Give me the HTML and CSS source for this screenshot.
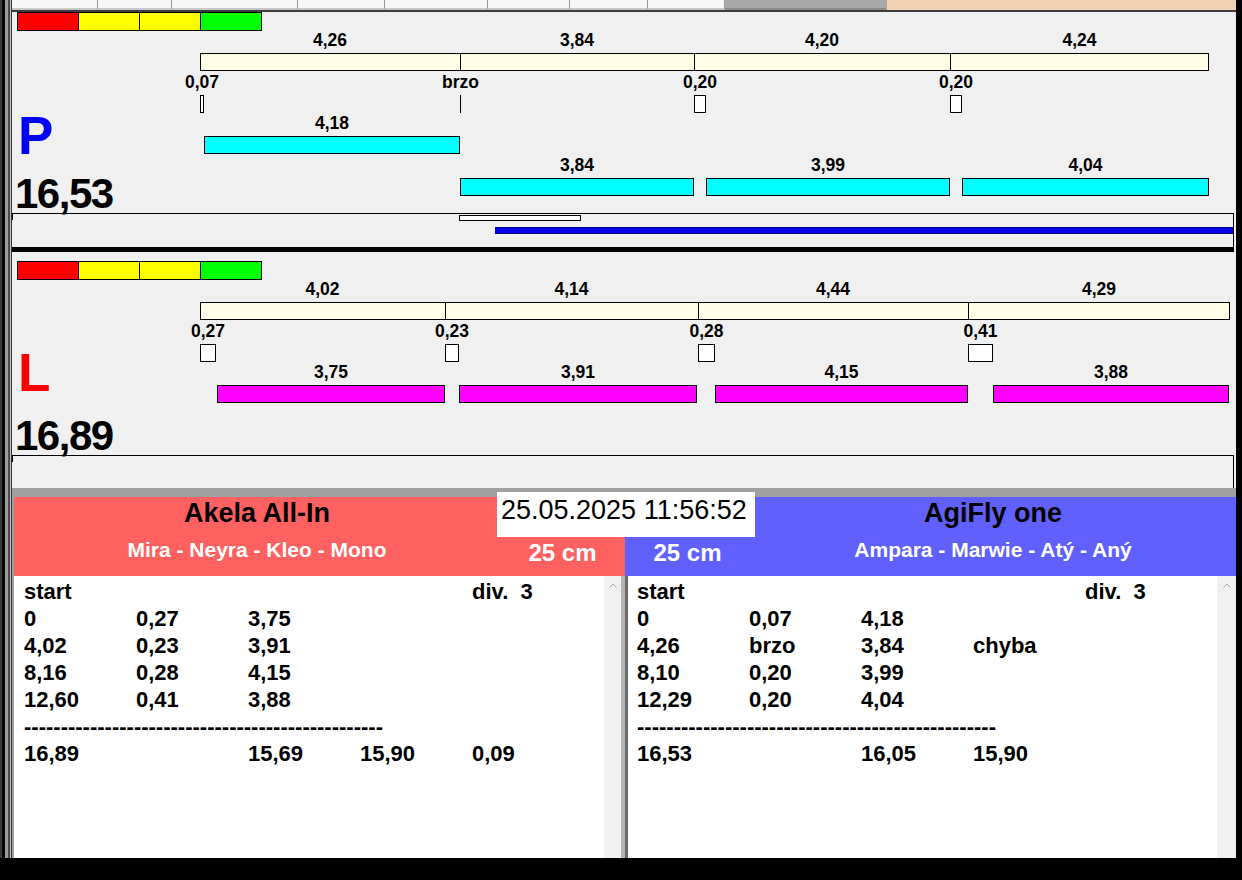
FILE: index.html
```html
<!DOCTYPE html>
<html>
<head>
<meta charset="utf-8">
<title>Agility - beh</title>
<link rel="stylesheet" href="styles.css">
</head>
<body>
<div class="app">
  <div class="edge"></div>
  <div class="main">
    <div class="tabs">
      <div class="tab t1"></div>
      <div class="tab t2"></div>
      <div class="tab t3"></div>
      <div class="tab t4"></div>
      <div class="tab t5"></div>
      <div class="tab t6"></div>
      <div class="tab t7"></div>
      <div class="tab t8"></div>
      <div class="tab-off"></div>
      <div class="tab-peach"></div>
    </div>

    <!-- P lane -->
    <div class="panel p">
      <div class="sig"><span class="r"></span><span class="y"></span><span class="y"></span><span class="g"></span></div>
      <div class="lane">
        <div class="side">
          <div class="letter">P</div>
          <div class="total">16,53</div>
        </div>
        <div class="chart">
          <div class="row laps">
            <div class="lap" style="width:260px"><span class="lb">4,26</span><span class="cell"></span></div>
            <div class="lap" style="width:234px"><span class="lb">3,84</span><span class="cell"></span></div>
            <div class="lap" style="width:256px"><span class="lb">4,20</span><span class="cell"></span></div>
            <div class="lap" style="width:259px"><span class="lb">4,24</span><span class="cell"></span></div>
          </div>
          <div class="row gaps">
            <div class="gp" style="width:4px"><span class="lb">0,07</span><span class="box"></span></div>
            <div class="gp" style="margin-left:256px;width:1px"><span class="lb">brzo</span><span class="box line"></span></div>
            <div class="gp" style="margin-left:233px;width:12px"><span class="lb">0,20</span><span class="box"></span></div>
            <div class="gp" style="margin-left:244px;width:12px"><span class="lb">0,20</span><span class="box"></span></div>
          </div>
          <div class="row runs">
            <div class="run cyan" style="margin-left:4px;width:256px"><span class="lb">4,18</span><span class="bar"></span></div>
          </div>
          <div class="row runs">
            <div class="run cyan" style="margin-left:260px;width:234px"><span class="lb">3,84</span><span class="bar"></span></div>
            <div class="run cyan" style="margin-left:12px;width:244px"><span class="lb">3,99</span><span class="bar"></span></div>
            <div class="run cyan" style="margin-left:12px;width:247px"><span class="lb">4,04</span><span class="bar"></span></div>
          </div>
        </div>
      </div>
      <div class="track">
        <div class="tb white" style="margin-left:447px;width:122px"></div>
        <div class="tb blue" style="margin-left:483px"></div>
      </div>
    </div>

    <div class="sep"></div>

    <!-- L lane -->
    <div class="panel l">
      <div class="sig"><span class="r"></span><span class="y"></span><span class="y"></span><span class="g"></span></div>
      <div class="lane">
        <div class="side">
          <div class="letter">L</div>
          <div class="total">16,89</div>
        </div>
        <div class="chart">
          <div class="row laps">
            <div class="lap" style="width:245px"><span class="lb">4,02</span><span class="cell"></span></div>
            <div class="lap" style="width:253px"><span class="lb">4,14</span><span class="cell"></span></div>
            <div class="lap" style="width:270px"><span class="lb">4,44</span><span class="cell"></span></div>
            <div class="lap" style="width:262px"><span class="lb">4,29</span><span class="cell"></span></div>
          </div>
          <div class="row gaps">
            <div class="gp" style="width:16px"><span class="lb">0,27</span><span class="box"></span></div>
            <div class="gp" style="margin-left:229px;width:14px"><span class="lb">0,23</span><span class="box"></span></div>
            <div class="gp" style="margin-left:239px;width:17px"><span class="lb">0,28</span><span class="box"></span></div>
            <div class="gp" style="margin-left:253px;width:25px"><span class="lb">0,41</span><span class="box"></span></div>
          </div>
          <div class="row runs">
            <div class="run mag" style="margin-left:17px;width:228px"><span class="lb">3,75</span><span class="bar"></span></div>
            <div class="run mag" style="margin-left:14px;width:238px"><span class="lb">3,91</span><span class="bar"></span></div>
            <div class="run mag" style="margin-left:18px;width:253px"><span class="lb">4,15</span><span class="bar"></span></div>
            <div class="run mag" style="margin-left:25px;width:236px"><span class="lb">3,88</span><span class="bar"></span></div>
          </div>
        </div>
      </div>
      <div class="track"></div>
    </div>

    <div class="gray"></div>

    <div class="bottom">
      <div class="stamp">25.05.2025 11:56:52</div>
      <div class="heads">
        <div class="head red">
          <div class="name">Akela All-In</div>
          <div></div>
          <div class="dogs">Mira - Neyra - Kleo - Mono</div>
          <div class="cm">25 cm</div>
        </div>
        <div class="head blue">
          <div></div>
          <div class="name">AgiFly one</div>
          <div class="cm">25 cm</div>
          <div class="dogs">Ampara - Marwie - Atý - Aný</div>
        </div>
      </div>
      <div class="lists">
        <div class="list">
          <div class="ln"><span>start</span><span></span><span></span><span></span><span>div.  3</span></div>
          <div class="ln"><span>0</span><span>0,27</span><span>3,75</span></div>
          <div class="ln"><span>4,02</span><span>0,23</span><span>3,91</span></div>
          <div class="ln"><span>8,16</span><span>0,28</span><span>4,15</span></div>
          <div class="ln"><span>12,60</span><span>0,41</span><span>3,88</span></div>
          <div class="ln"><span class="dash">-------------------------------------------------</span></div>
          <div class="ln"><span>16,89</span><span></span><span>15,69</span><span>15,90</span><span>0,09</span></div>
        </div>
        <div class="scroll"><svg width="8" height="5" viewBox="0 0 8 5"><path d="M0.5 4.5 L4 1 L7.5 4.5" fill="none" stroke="#a8a8a8" stroke-width="1"/></svg></div>
        <div class="split"></div>
        <div class="list r">
          <div class="ln"><span>start</span><span></span><span></span><span></span><span>div.  3</span></div>
          <div class="ln"><span>0</span><span>0,07</span><span>4,18</span></div>
          <div class="ln"><span>4,26</span><span>brzo</span><span>3,84</span><span>chyba</span></div>
          <div class="ln"><span>8,10</span><span>0,20</span><span>3,99</span></div>
          <div class="ln"><span>12,29</span><span>0,20</span><span>4,04</span></div>
          <div class="ln"><span class="dash">-------------------------------------------------</span></div>
          <div class="ln"><span>16,53</span><span></span><span>16,05</span><span>15,90</span></div>
        </div>
        <div class="scroll"><svg width="8" height="5" viewBox="0 0 8 5"><path d="M0.5 4.5 L4 1 L7.5 4.5" fill="none" stroke="#a8a8a8" stroke-width="1"/></svg></div>
      </div>
    </div>
  </div>
</div>
</body>
</html>
```

FILE: styles.css
```css
body,div,span{margin:0;padding:0;}
body{
  background:#000;
  font-family:"Liberation Sans", Arial, sans-serif;
  color:#000;
}
.app{
  display:flex;
  height:858px;
}
.edge{
  width:12px;
  flex:none;
  background:linear-gradient(to right,#3a3a3a 0 2px,#050505 2px 5px,#9c9c9c 5px 8px,#4a4a4a 8px 10px,#c4c4c4 10px 11px,#303030 11px 12px);
}
.main{
  width:1224px;
  flex:none;
  background:#f0f0f0;
}

/* tab strip, mostly cut off */
.tabs{display:flex;height:10px;}
.tab{
  height:10px;
  box-sizing:border-box;
  background:#f7f7f7;
  border-right:1px solid #9a9a9a;
  border-bottom:2px solid #c8c8c8;
}
.t1{width:86px;}
.t2{width:74px;}
.t3{width:126px;}
.t4{width:87px;}
.t5{width:103px;}
.t6{width:82px;}
.t7{width:78px;}
.t8{width:77px;}
.tab-off{width:161px;background:#a9a9a9;border-bottom:2px solid #8a8a8a;box-sizing:border-box;}
.tab-peach{flex:1;background:#f0d3b6;border-left:1px solid #c0a080;}

/* lanes */
.panel{background:#f0f0f0;}
.panel.p{border-top:2px solid #3c3c3c;}
.panel.l{padding-top:9px;}
.sig{
  display:flex;
  width:245px;
  height:19px;
  box-sizing:border-box;
  border:1px solid #000;
  margin-left:5px;
}
.sig span{
  width:61px;
  box-sizing:border-box;
  border-left:1px solid #000;
}
.sig span:first-child{width:60px;border-left:0;}
.sig .r{background:#ff0000;}
.sig .y{background:#ffff00;}
.sig .g{background:#00ff00;}

.lane{display:flex;}
.p .lane{height:182px;}
.l .lane{height:175px;}
.side{width:188px;flex:none;}
.letter{
  font-weight:bold;
  font-size:53px;
  line-height:52px;
  padding-left:6px;
}
.p .letter{color:#0000ff;margin-top:79px;}
.l .letter{color:#ff0000;margin-top:67px;}
.total{
  font-weight:bold;
  font-size:42px;
  line-height:41px;
  letter-spacing:-1.5px;
  padding-left:3px;
}
.p .total{margin-top:11px;}
.l .total{margin-top:16px;}

.chart{flex:1;}
.row{display:flex;}
.lap,.gp,.run{
  flex:none;
  display:flex;
  flex-direction:column;
  align-items:center;
}
.lb{
  font-weight:bold;
  font-size:17.5px;
  line-height:18px;
  white-space:nowrap;
}
.cell,.box,.bar{
  align-self:stretch;
  height:18px;
  margin-top:4px;
  box-sizing:border-box;
}
.cell{background:#fffde6;border:1px solid #000;border-right:0;}
.lap:last-child .cell{border-right:1px solid #000;}
.box{background:#fff;border:1px solid #000;}
.box.line{background:#000;border:0;}
.bar{border:1px solid #000;}
.cyan .bar{background:#00ffff;}
.mag .bar{background:#ff00ff;}
.gaps{margin-top:2px;}
.runs{margin-top:1px;}
.runs + .runs{margin-top:2px;}

.track{
  box-sizing:border-box;
  border-top:1px solid #000;
  border-right:1px solid #000;
  margin-right:2px;
  background:linear-gradient(#000,#000) no-repeat 0 0 / 1px 6px;
}
.p .track{height:34px;}
.l .track{height:33px;}
.tb{box-sizing:border-box;}
.tb.white{height:6px;margin-top:1px;background:#fff;border:1px solid #000;}
.tb.blue{
  height:7px;
  margin-top:6px;
  background:#0000e8;
  border-top:1px solid #000080;
  border-bottom:1px solid #000080;
}
.sep{height:5px;background:#000;margin-right:2px;}
.gray{height:9px;background:#a0a0a0;}

/* result table */
.bottom{
  position:relative;
  border-left:2px solid #a0a0a0;
}
.stamp{
  position:absolute;
  top:-5px;
  left:483px;
  width:258px;
  height:45px;
  box-sizing:border-box;
  padding:3px 0 0 4px;
  background:#fff;
  font-size:27px;
  line-height:30px;
  white-space:nowrap;
}
.heads{display:grid;grid-template-columns:611px 611px;height:79px;}
.head{display:grid;grid-template-rows:40px 39px;}
.head.red{grid-template-columns:486px 125px;background:#ff6060;}
.head.blue{grid-template-columns:125px 486px;background:#6060ff;}
.name{
  font-weight:bold;
  font-size:27px;
  line-height:32px;
  text-align:center;
}
.dogs{
  font-weight:bold;
  font-size:21px;
  line-height:25px;
  color:#fff;
  text-align:center;
}
.cm{
  font-weight:bold;
  font-size:24px;
  line-height:32px;
  color:#fff;
  text-align:center;
}
.lists{
  display:grid;
  grid-template-columns:590px 17px 7px 589px 19px;
  height:282px;
}
.list{background:#fff;padding:2px 0 0 10px;}
.list.r{padding-left:9px;}
.ln{
  display:grid;
  grid-template-columns:repeat(5,112px);
  font-weight:bold;
  font-size:22px;
  line-height:27px;
  white-space:pre;
}
.ln .dash{grid-column:1 / -1;}
.scroll{background:#f0f0f0;text-align:center;}
.scroll svg{display:block;margin:7px auto 0;}
.split{background:linear-gradient(to right,#b4b4b4 0 4px,#6a6a6a 4px 7px);}
```
